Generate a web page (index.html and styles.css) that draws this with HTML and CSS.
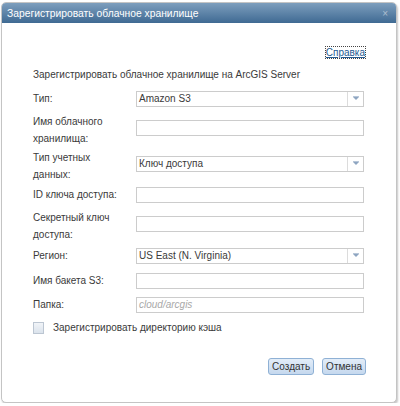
FILE: index.html
```html
<!DOCTYPE html>
<html lang="ru">
<head>
<meta charset="utf-8">
<title>Зарегистрировать облачное хранилище</title>
<link rel="stylesheet" href="styles.css">
</head>
<body>
<div class="dialog">
  <div class="titlebar">
    <span class="title">Зарегистрировать облачное хранилище</span>
    <span class="close">×</span>
  </div>
  <div class="content">
    <div class="help"><a href="#" class="help-link">Справка</a></div>
    <div class="intro">Зарегистрировать облачное хранилище на ArcGIS Server</div>
    <div class="form">
      <div class="row mb6">
        <div class="label">Тип:</div>
        <div class="select"><span class="value">Amazon S3</span><span class="arrow"></span></div>
      </div>
      <div class="row two mb2">
        <div class="label">Имя облачного<br>хранилища:</div>
        <div class="input"></div>
      </div>
      <div class="row two mb3">
        <div class="label">Тип учетных<br>данных:</div>
        <div class="select"><span class="value">Ключ доступа</span><span class="arrow"></span></div>
      </div>
      <div class="row mb6">
        <div class="label">ID ключа доступа:</div>
        <div class="input"></div>
      </div>
      <div class="row two mb4">
        <div class="label">Секретный ключ<br>доступа:</div>
        <div class="input"></div>
      </div>
      <div class="row mb8">
        <div class="label">Регион:</div>
        <div class="select"><span class="value">US East (N. Virginia)</span><span class="arrow"></span></div>
      </div>
      <div class="row mb7">
        <div class="label">Имя бакета S3:</div>
        <div class="input"></div>
      </div>
      <div class="row mb6">
        <div class="label">Папка:</div>
        <div class="input"><span class="placeholder">cloud/arcgis</span></div>
      </div>
      <div class="check-row">
        <span class="checkbox"></span>
        <span class="check-label">Зарегистрировать директорию кэша</span>
      </div>
    </div>
    <div class="buttons">
      <button class="btn">Создать</button>
      <button class="btn">Отмена</button>
    </div>
  </div>
</div>
</body>
</html>
```

FILE: styles.css
```css
html, body {
  margin: 0;
  padding: 0;
  background: #ffffff;
}
body {
  font-family: "Liberation Sans", Arial, sans-serif;
  font-size: 10px;
  color: #3a3a3a;
}
.dialog {
  box-sizing: border-box;
  margin: 2px 0 0 1px;
  width: 396px;
  height: 401px;
  border: 1px solid #c4c4c4;
  border-radius: 5px;
  overflow: hidden;
  box-shadow: 1px 2px 2px rgba(0, 0, 0, 0.22);
  display: flex;
  flex-direction: column;
  background: #fff;
}
.titlebar {
  height: 20px;
  flex: none;
  display: flex;
  justify-content: space-between;
  align-items: center;
  padding: 0 8px 0 5px;
  background: linear-gradient(#7d9ebd, #3f6a93);
  color: #ffffff;
}
.title {
  font-size: 10.3px;
}
.close {
  color: #aebfcf;
  font-size: 10px;
}
.content {
  flex: 1;
  display: flex;
  flex-direction: column;
  padding: 0 31px 0 31px;
}
.help {
  margin-top: 23px;
  text-align: right;
  line-height: 13px;
}
.help-link {
  color: #245a91;
  text-decoration: underline;
  outline: 1px dotted #444;
  outline-offset: 0;
}
.intro {
  margin-top: 9px;
  line-height: 13px;
}
.form {
  margin-top: 9px;
  display: flex;
  flex-direction: column;
}
.row {
  display: flex;
  align-items: flex-start;
}
.mb2 { margin-bottom: 2px; }
.mb3 { margin-bottom: 3px; }
.mb4 { margin-bottom: 4px; }
.mb6 { margin-bottom: 6px; }
.mb7 { margin-bottom: 7px; }
.mb8 { margin-bottom: 8px; }
.label {
  width: 103px;
  flex: none;
  line-height: 17px;
}
.input, .select {
  box-sizing: border-box;
  width: 228px;
  height: 16px;
  margin-top: 1px;
  border: 1px solid #cccccc;
  background: #fff;
  display: flex;
  align-items: center;
  padding-left: 2px;
  line-height: 14px;
}
.row.two .input, .row.two .select {
  margin-top: 7px;
}
.select .value {
  flex: 1;
}
.select .arrow {
  width: 15px;
  height: 14px;
  border-left: 1px solid #dcdcdc;
  position: relative;
}
.select .arrow::before {
  content: "";
  position: absolute;
  left: 5px;
  top: 5px;
  border-left: 3px solid transparent;
  border-right: 3px solid transparent;
  border-top: 3px solid #8ea5c1;
}
.select .arrow::after {
  content: "";
  position: absolute;
  left: 5px;
  top: 4px;
  width: 6px;
  height: 1px;
  background: #b7c6d8;
}
.placeholder {
  color: #a8a8a8;
  font-style: italic;
}
.check-row {
  display: flex;
  align-items: center;
  height: 17px;
}
.checkbox {
  box-sizing: border-box;
  width: 11px;
  height: 12px;
  border: 1px solid #bcc6d2;
  background: linear-gradient(#f1f4f8, #dbe3ec);
  margin-right: 9px;
}
.buttons {
  margin-top: auto;
  margin-bottom: 27px;
  margin-right: -1px;
  display: flex;
  justify-content: flex-end;
  gap: 8px;
}
.btn {
  box-sizing: border-box;
  height: 17px;
  padding: 0 3px;
  font-family: "Liberation Sans", Arial, sans-serif;
  font-size: 10px;
  color: #333;
  border: 1px solid #8fb1d5;
  border-radius: 3px;
  background: linear-gradient(#e3edf8, #c5d8ee);
  line-height: 15px;
}
```
